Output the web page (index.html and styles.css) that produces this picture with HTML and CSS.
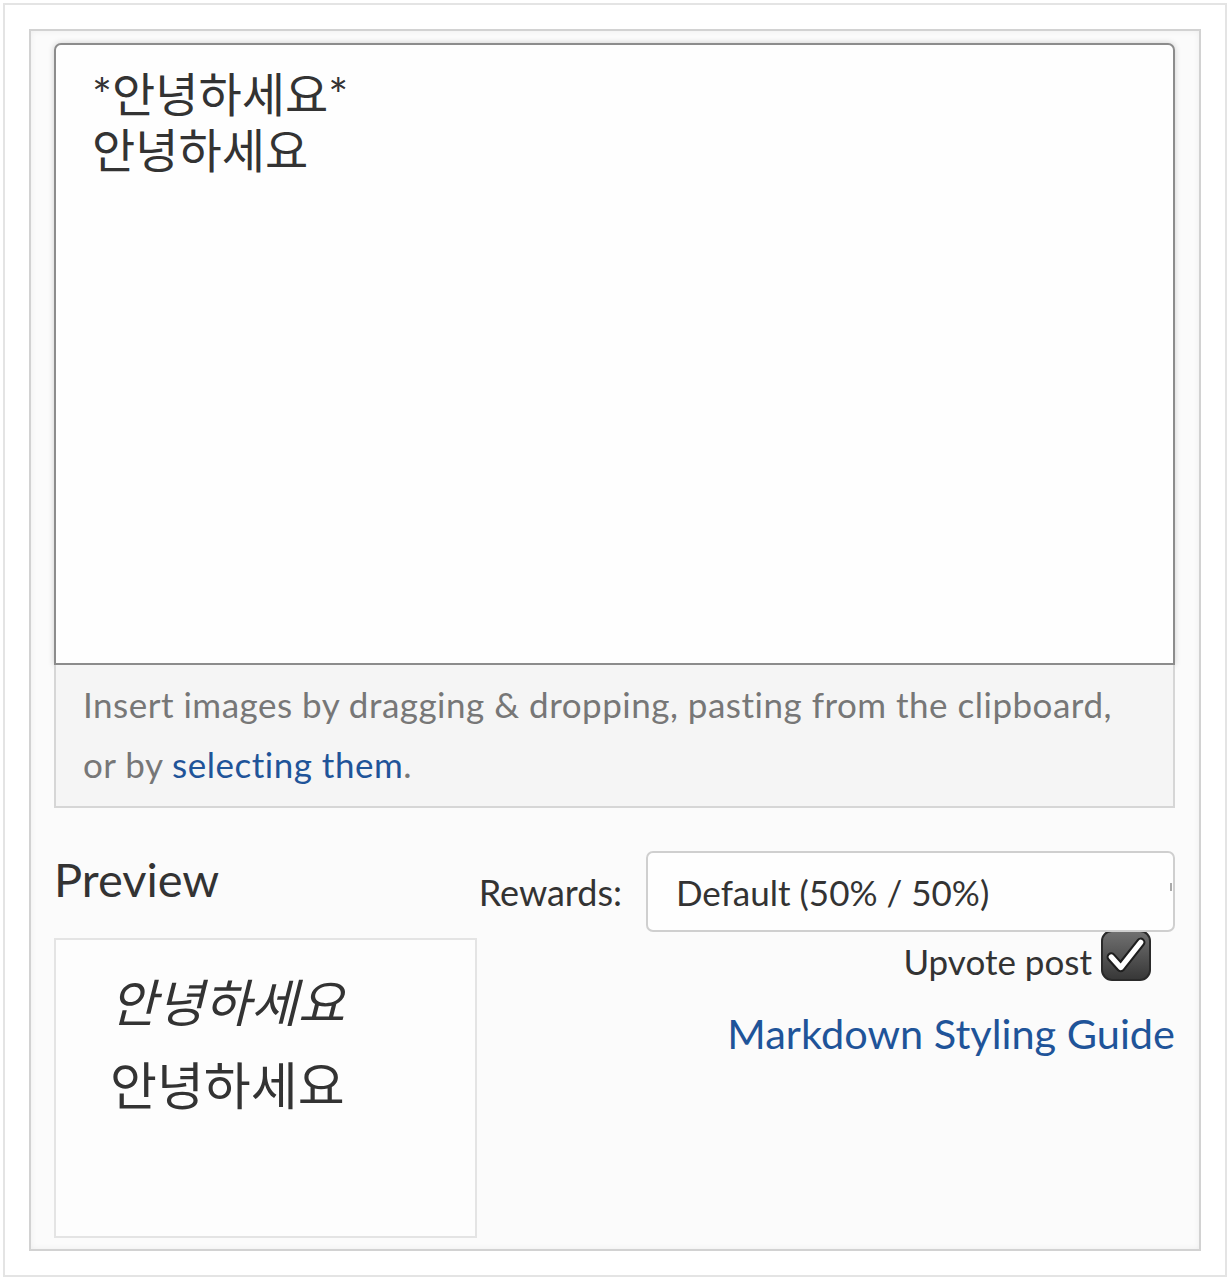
FILE: index.html
```html
<!DOCTYPE html>
<html lang="ko">
<head>
<meta charset="utf-8">
<title>Editor</title>
<link rel="stylesheet" href="styles.css">
</head>
<body>
<div class="frame">
  <div class="panel">
    <div class="editor">
      <div class="textarea">*안녕하세요*<br>안녕하세요</div>
      <div class="dropzone">Insert images by dragging &amp; dropping, pasting from the clipboard,<br>or by <a class="link" href="#">selecting them</a>.</div>
    </div>
    <div class="bottom">
      <div class="left">
        <h2 class="preview-title">Preview</h2>
        <div class="preview">
          <p class="em">안녕하세요</p>
          <p>안녕하세요</p>
        </div>
      </div>
      <div class="right">
        <div class="rewards">
          <span class="label">Rewards:</span>
          <div class="select">Default (50% / 50%)<span class="arrow"></span></div>
        </div>
        <div class="upvote">
          <span class="upvote-label">Upvote post</span>
          <span class="checkbox">
            <svg width="42" height="42" viewBox="0 0 40 40">
              <polyline points="6,21 15,31 34,7" fill="none" stroke="#1e1e1e" stroke-width="9" stroke-linecap="round" stroke-linejoin="round"/>
              <polyline points="6,21 15,31 34,7" fill="none" stroke="#fff" stroke-width="5" stroke-linecap="round" stroke-linejoin="round"/>
            </svg>
          </span>
        </div>
        <a class="guide" href="#">Markdown Styling Guide</a>
      </div>
    </div>
  </div>
</div>
</body>
</html>
```

FILE: styles.css
```css
html, body {
  margin: 0;
  padding: 0;
  background: #ffffff;
}
body {
  font-family: Lato, "Noto Sans CJK KR", sans-serif;
  color: #333333;
}
.frame {
  margin: 3px;
  height: 1274px;
  box-sizing: border-box;
  border: 2px solid #e4e4e4;
  padding: 24px;
  background: #ffffff;
}
.panel {
  height: 1222px;
  box-sizing: border-box;
  border: 2px solid #d2d2d2;
  box-shadow: inset 0 0 6px rgba(0,0,0,0.06);
  background: #fbfbfb;
  padding: 12px 24px 11px 23px;
}
.textarea {
  height: 622px;
  box-sizing: border-box;
  border: 2px solid #8c8c8c;
  border-radius: 7px 7px 0 0;
  box-shadow: 0 0 6px rgba(0,0,0,0.18);
  background: #fefefe;
  padding: 21px 36px;
  font-family: Lato, "Noto Sans CJK KR", sans-serif;
  font-size: 47px;
  line-height: 56px;
  color: #333;
}
.dropzone {
  box-sizing: border-box;
  height: 143px;
  border: 2px solid #d6d6d6;
  border-top: none;
  background: #f5f5f5;
  padding: 9px 27px 0;
  font-size: 35px;
  letter-spacing: 0.5px;
  line-height: 60px;
  color: #777777;
  white-space: nowrap;
}
.link {
  color: #1f5499;
  text-decoration: none;
}
.bottom {
  display: flex;
  margin-top: 43px;
}
.left {
  width: 423px;
  flex: none;
}
.preview-title {
  margin: 0;
  font-weight: normal;
  font-size: 47px;
  line-height: 56px;
  color: #333;
}
.preview {
  margin-top: 31px;
  height: 300px;
  box-sizing: border-box;
  border: 2px solid #e4e4e4;
  background: #fdfdfd;
  padding: 30px 0 0 54px;
}
.preview p {
  margin: 0 0 23px;
  font-family: "Noto Sans CJK KR", sans-serif;
  font-size: 51px;
  line-height: 60px;
  color: #333;
}
.preview .em {
  font-style: italic;
}
.right {
  flex: 1;
  display: flex;
  flex-direction: column;
  align-items: flex-end;
}
.rewards {
  display: flex;
  align-items: center;
  gap: 24px;
}
.label {
  font-size: 36px;
  color: #333;
}
.select {
  position: relative;
  width: 529px;
  height: 81px;
  box-sizing: border-box;
  border: 2px solid #cfcfcf;
  border-radius: 7px;
  background: #fefefe;
  padding-left: 28px;
  display: flex;
  align-items: center;
  font-size: 35px;
  color: #333;
}
.arrow {
  position: absolute;
  right: 1px;
  top: 30px;
  width: 2px;
  height: 8px;
  background: #aaa;
}
.upvote {
  display: flex;
  align-items: flex-end;
  gap: 9px;
  margin-top: -2px;
  margin-right: 24px;
}
.upvote-label {
  font-size: 35px;
  line-height: 40px;
  color: #333;
}
.checkbox {
  width: 50px;
  height: 51px;
  box-sizing: border-box;
  border: 2px solid #2a2a2a;
  border-radius: 11px;
  background: linear-gradient(#707070, #383838);
  display: flex;
  align-items: center;
  justify-content: center;
}
.guide {
  margin-top: 29px;
  font-size: 41.5px;
  line-height: 47px;
  color: #1f5499;
  text-decoration: none;
}
```
